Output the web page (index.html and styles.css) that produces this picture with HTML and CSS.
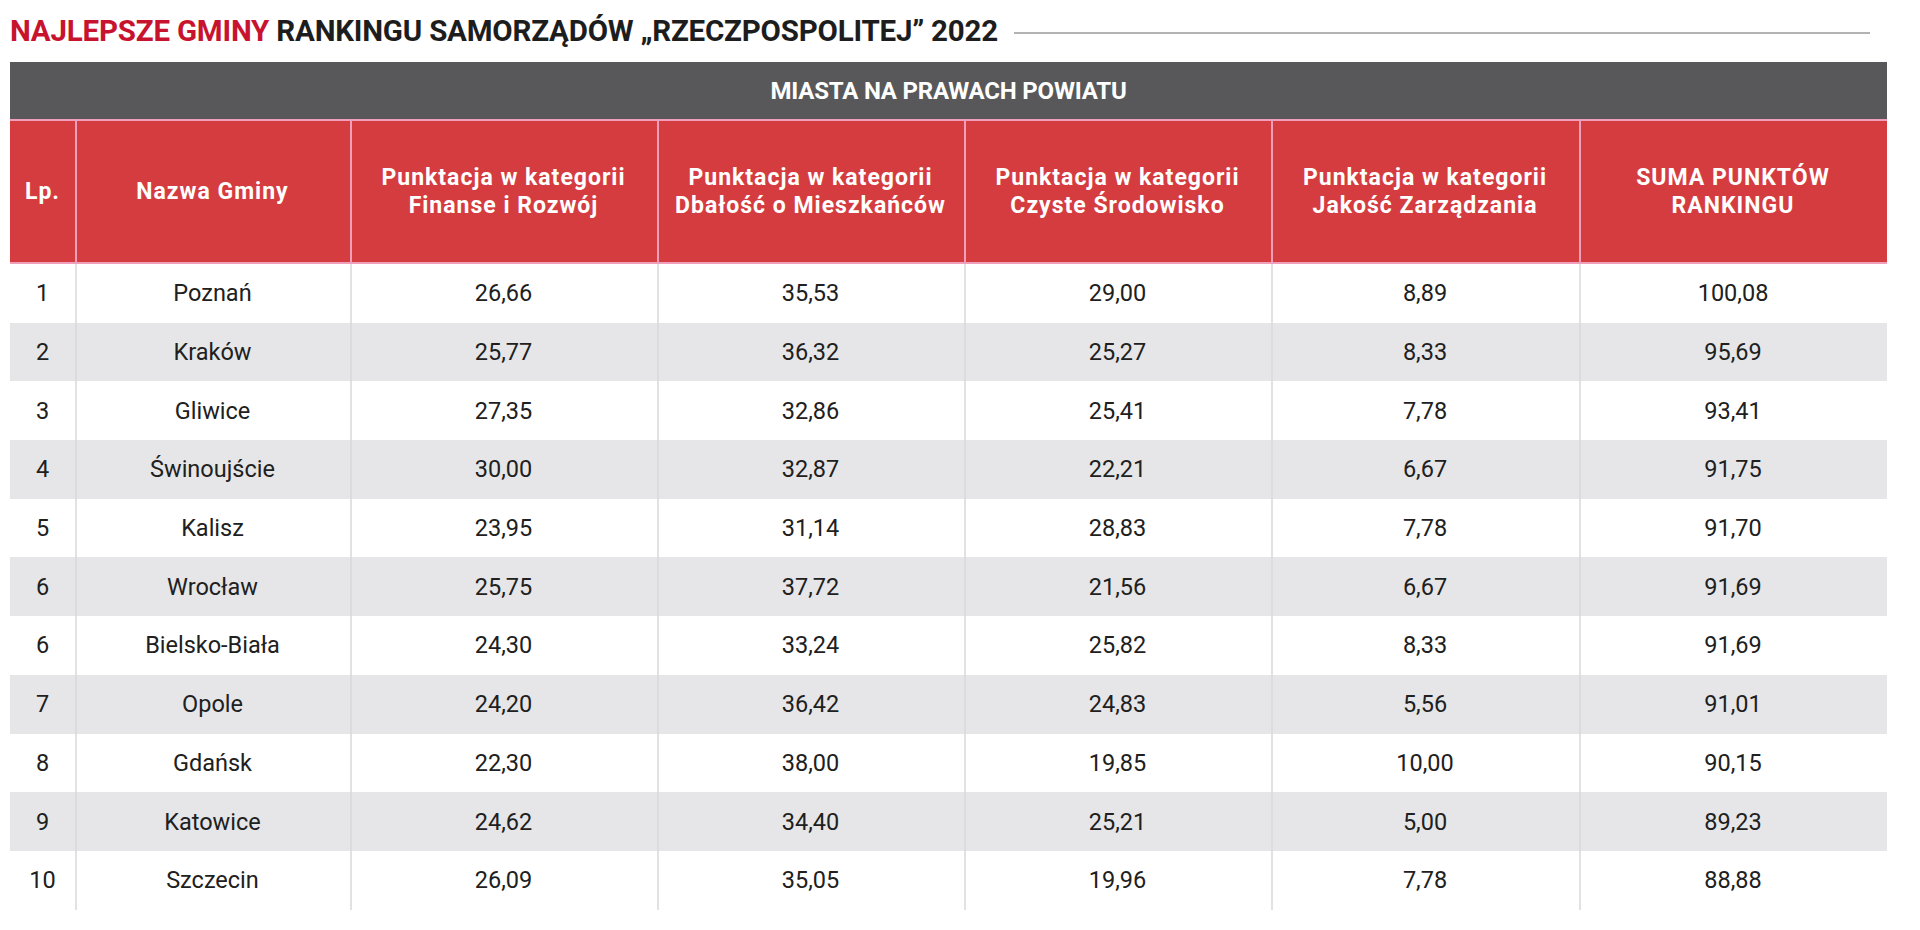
FILE: index.html
```html
<!DOCTYPE html>
<html lang="pl">
<head>
<meta charset="utf-8">
<title>Najlepsze gminy – ranking samorządów</title>
<link rel="stylesheet" href="styles.css">
</head>
<body>
<div class="page">
  <div class="title-row">
    <h1 class="title"><span class="accent">NAJLEPSZE GMINY</span> RANKINGU SAMORZĄDÓW „RZECZPOSPOLITEJ” 2022</h1>
    <div class="title-rule"></div>
  </div>
  <table class="ranking">
    <colgroup>
      <col class="c-lp"><col class="c-name"><col class="c-a"><col class="c-b"><col class="c-c"><col class="c-d"><col class="c-e">
    </colgroup>
    <thead>
      <tr class="band"><th colspan="7">MIASTA NA PRAWACH POWIATU</th></tr>
      <tr class="head">
        <th>Lp.</th>
        <th>Nazwa Gminy</th>
        <th>Punktacja w kategorii<br>Finanse i Rozwój</th>
        <th>Punktacja w kategorii<br>Dbałość o Mieszkańców</th>
        <th>Punktacja w kategorii<br>Czyste Środowisko</th>
        <th>Punktacja w kategorii<br>Jakość Zarządzania</th>
        <th>SUMA PUNKTÓW<br>RANKINGU</th>
      </tr>
    </thead>
    <tbody>
      <tr><td>1</td><td>Poznań</td><td>26,66</td><td>35,53</td><td>29,00</td><td>8,89</td><td>100,08</td></tr>
      <tr><td>2</td><td>Kraków</td><td>25,77</td><td>36,32</td><td>25,27</td><td>8,33</td><td>95,69</td></tr>
      <tr><td>3</td><td>Gliwice</td><td>27,35</td><td>32,86</td><td>25,41</td><td>7,78</td><td>93,41</td></tr>
      <tr><td>4</td><td>Świnoujście</td><td>30,00</td><td>32,87</td><td>22,21</td><td>6,67</td><td>91,75</td></tr>
      <tr><td>5</td><td>Kalisz</td><td>23,95</td><td>31,14</td><td>28,83</td><td>7,78</td><td>91,70</td></tr>
      <tr><td>6</td><td>Wrocław</td><td>25,75</td><td>37,72</td><td>21,56</td><td>6,67</td><td>91,69</td></tr>
      <tr><td>6</td><td>Bielsko-Biała</td><td>24,30</td><td>33,24</td><td>25,82</td><td>8,33</td><td>91,69</td></tr>
      <tr><td>7</td><td>Opole</td><td>24,20</td><td>36,42</td><td>24,83</td><td>5,56</td><td>91,01</td></tr>
      <tr><td>8</td><td>Gdańsk</td><td>22,30</td><td>38,00</td><td>19,85</td><td>10,00</td><td>90,15</td></tr>
      <tr><td>9</td><td>Katowice</td><td>24,62</td><td>34,40</td><td>25,21</td><td>5,00</td><td>89,23</td></tr>
      <tr><td>10</td><td>Szczecin</td><td>26,09</td><td>35,05</td><td>19,96</td><td>7,78</td><td>88,88</td></tr>
    </tbody>
  </table>
</div>
</body>
</html>
```
FILE: styles.css
```css
html, body {
  margin: 0;
  padding: 0;
  background: #ffffff;
}

body {
  font-family: Roboto, "Liberation Sans", Arial, sans-serif;
  color: #222222;
}

.page {
  padding: 0 33px 0 10px;
}

.title-row {
  display: flex;
  align-items: center;
  height: 62px;
}

.title {
  margin: 0;
  font-size: 29.5px;
  font-weight: 700;
  line-height: 36px;
  color: #1d1d1d;
  white-space: nowrap;
  letter-spacing: -0.2px;
}

.title .accent {
  color: #c8132f;
}

.title-rule {
  flex: 1;
  height: 2px;
  background: #b3b3b3;
  margin: 4px 17px 0 16px;
}

.ranking {
  width: 1877px;
  border-collapse: separate;
  border-spacing: 0;
  table-layout: fixed;
}

.c-lp { width: 65px; }
.c-name { width: 275px; }
.c-a { width: 307px; }
.c-b { width: 307px; }
.c-c { width: 307px; }
.c-d { width: 308px; }
.c-e { width: 308px; }

.ranking th,
.ranking td {
  padding: 0;
  text-align: center;
  vertical-align: middle;
}

.band th {
  height: 57px;
  background: #58585a;
  color: #ffffff;
  font-size: 24px;
  font-weight: 700;
  letter-spacing: -0.2px;
}

.head th {
  height: 145px;
  background: #d53c40;
  color: #ffffff;
  font-size: 23px;
  font-weight: 700;
  line-height: 28px;
  letter-spacing: 1px;
  box-shadow: inset 0 2px 0 #ef9fba, inset 0 -2px 0 #ef9fba;
}

.head th + th {
  box-shadow: inset 2px 0 0 #ef9fba, inset 0 2px 0 #ef9fba, inset 0 -2px 0 #ef9fba;
}

.ranking tbody td {
  height: 58.7px;
  font-size: 23.5px;
  font-weight: 400;
  color: #202020;
  background: #ffffff;
}

.ranking tbody tr:nth-child(even) td {
  background: #e6e6e8;
}

.ranking tbody td + td {
  box-shadow: inset 2px 0 0 #e2e2e2;
}

.ranking tbody tr:nth-child(even) td + td {
  box-shadow: inset 2px 0 0 #dcdcde;
}
```
